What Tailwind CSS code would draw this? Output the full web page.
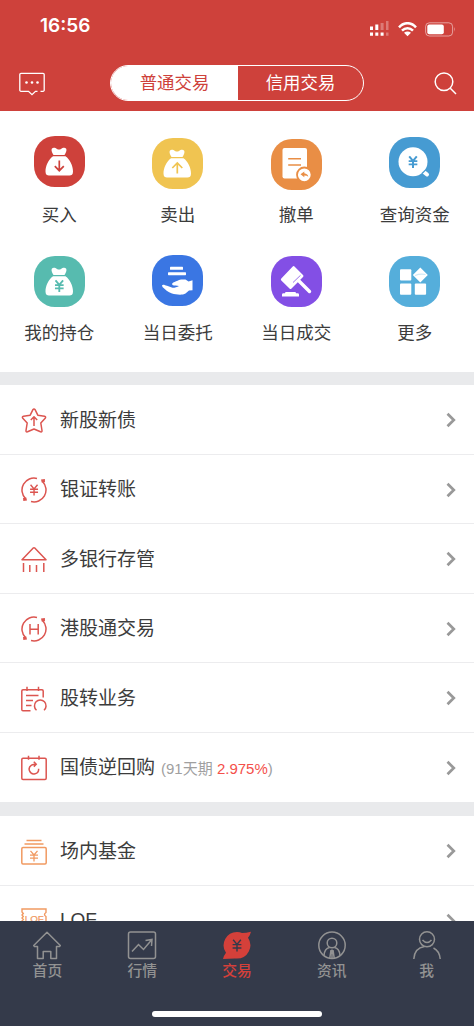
<!DOCTYPE html>
<html lang="zh-CN">
<head>
<meta charset="utf-8">
<meta name="viewport" content="width=device-width, initial-scale=1">
<title>交易</title>
<script src="https://cdn.jsdelivr.net/npm/@tailwindcss/browser@4"></script>
</head>
<body class="h-[1026px] w-[474px] overflow-hidden bg-white font-['Liberation_Sans','Noto_Sans_CJK_SC',sans-serif] text-[#3c3c3c]">
<svg class="hidden">
  <symbol id="chev" viewBox="0 0 10 16"><path d="M1.500 1.800 7.800 8 1.500 14.200" fill="none" stroke="#999" stroke-width="2.700"/></symbol>
  <symbol id="bag" viewBox="0 0 51 51"><path fill="#fff" d="M19.500 19C18 16.500 17 14.500 17.800 12.800 19 11 21.500 11.800 23 13 24.300 13.800 25.700 13.800 27 13 28.500 11.800 31 11 32.200 12.800 33 14.500 32 16.500 30.500 19ZM19 20.300H31.500C36 23.500 39 30 39 35.500 39 38.500 37.500 39.500 35.500 39.500H15C13 39.500 11.500 38.500 11.500 35.500 11.500 30 14.500 23.500 19 20.300Z"/></symbol>
  <symbol id="yen" viewBox="0 0 10 12"><path d="M1.500 .8 5 5 8.500 .8M5 5V11.500M1 5.200H9M1 8.200H9" fill="none" stroke="currentColor"/></symbol>
  <symbol id="cycle" viewBox="0 0 26 26"><g fill="none" stroke="currentColor" stroke-width="1.500"><path d="M16 1.400A12 12 0 0 0 4.500 21.500M10 24.600A12 12 0 0 0 21.500 4.500"/></g><path fill="currentColor" d="M2 21 5.300 20.500 6 23.500 2.300 24ZM20 2.500 23.900 2 24 5.200 20.700 5.500Z"/></symbol>
</svg>
<div class="flex h-full flex-col">
  <header class="h-[111px] shrink-0 bg-[#ce413b] text-white">
    <div class="flex h-[58px] items-center justify-between pr-[18px] pl-[40px]">
      <span class="-mt-[6px] font-['Inter'] text-[19px] leading-6 font-semibold">16:56</span>
      <div class="flex items-center gap-2">
        <svg class="h-[16px] w-[20px]" viewBox="0 0 20 16" fill="#fff"><path d="M0 5.500h3v3.500H0zM5.300 3.500h3V9h-3zM0 11.500h3v3.300H0zM5.300 11.500h3v3.300h-3zM10.600 11.500h3v3.300h-3z"/><path opacity=".3" d="M10.600 2h3v7h-3zM16 0h2.500v9H16zM16 11.500h2.500v3.300H16z"/></svg>
        <svg class="h-[15px] w-[19px]" viewBox="0 0 19 15" fill="none" stroke="#fff" stroke-width="2.500"><path d="M1 5.300C6-.2 13-.2 18 5.300M4 8.600C7.200 5.300 11.800 5.300 15 8.600"/><path fill="#fff" stroke="none" d="M6 10.800Q9.500 8.300 13 10.800L9.500 14.300Z"/></svg>
        <svg class="h-[15px] w-[31px]" viewBox="0 0 31 15"><rect x=".6" y=".8" width="27" height="13.200" rx="3.800" fill="none" stroke="#fff" stroke-opacity=".5"/><rect x="2.300" y="2.500" width="16.500" height="9.800" rx="2" fill="#fff"/><path d="M29.200 5Q31 7.400 29.200 9.800Z" fill="#fff" opacity=".5"/></svg>
      </div>
    </div>
    <div class="flex h-[51px] items-center pr-[17px] pl-[19px]">
      <svg class="h-[24px] w-[26px]" viewBox="0 0 26 24" fill="none" stroke="#fff" stroke-width="1.300"><path d="M21.500 19.300H24A1.200 1.200 0 0 0 25.200 18V2.500A1.200 1.200 0 0 0 24 1.300H2A1.200 1.200 0 0 0 .8 2.500V18A1.200 1.200 0 0 0 2 19.300H9.500L13 22.700 16.500 19.300H18.500"/><g fill="#fff" stroke="none"><circle cx="7.500" cy="10.500" r="1.300"/><circle cx="13" cy="10.500" r="1.300"/><circle cx="18.500" cy="10.500" r="1.300"/></g></svg>
      <div class="mt-[-1px] ml-[65px] flex h-[36px] w-[254px] overflow-hidden rounded-full border border-white text-[17.400px]">
        <div class="flex w-[127px] items-center justify-center bg-white pt-[1px] text-[#ce413b]">普通交易</div>
        <div class="flex flex-1 items-center justify-center pt-[1px]">信用交易</div>
      </div>
      <svg class="ml-auto h-[23px] w-[23px]" viewBox="0 0 23 23" fill="none" stroke="#fff" stroke-width="1.500"><circle cx="10" cy="9.800" r="8.800"/><path d="M16.300 16.200 22 22"/></svg>
    </div>
  </header>

  <section class="grid h-[260.500px] shrink-0 grid-cols-4 grid-rows-[118px_118px] pt-[25px] text-[17.500px] leading-[26px]">
    <div class="flex flex-col items-center gap-[15px]"><div class="size-[51px] rounded-[21px] bg-[#ce413b] text-[#ce413b]"><svg viewBox="0 0 51 51"><use href="#bag"/><path d="M25.300 24.500V34.500M20.800 30.200 25.300 34.700 29.800 30.200" fill="none" stroke="currentColor" stroke-width="1.700"/></svg></div><span>买入</span></div>
    <div class="flex flex-col items-center gap-[13px] pt-[2px]"><div class="size-[51px] rounded-[21px] bg-[#f0c451] text-[#f0c451]"><svg viewBox="0 0 51 51"><use href="#bag"/><path d="M25.300 35.500V25.500M20.300 30 25.300 25 30.300 30" fill="none" stroke="currentColor" stroke-width="1.700"/></svg></div><span>卖出</span></div>
    <div class="flex flex-col items-center gap-[12px] pt-[3px]"><div class="size-[51px] rounded-[21px] bg-[#e98e45]"><svg viewBox="0 0 51 51"><rect x="11.500" y="9" width="24.500" height="30.500" rx="2" fill="#fff"/><path d="M17.200 19.800H30M17.200 26H30" stroke="#e98e45" stroke-width="1.600"/><circle cx="33.300" cy="35.800" r="7.300" fill="#fff" stroke="#e98e45" stroke-width="1.800"/><path d="M29.500 35.300 33.300 32.500V34.300Q37 34.800 37.300 37.800 36 36.500 33.300 36.500V38.200Z" fill="#e98e45"/></svg></div><span>撤单</span></div>
    <div class="flex flex-col items-center gap-[14px] pt-[1px]"><div class="size-[51px] rounded-[21px] bg-[#469bd2] text-[#469bd2]"><svg viewBox="0 0 51 51"><circle cx="24" cy="24.800" r="14.500" fill="#fff"/><path d="M33 33.500 38 37.500" stroke="#fff" stroke-width="4" stroke-linecap="round"/><path d="M33 36.500 36.800 32.800" stroke="currentColor" stroke-width="1.200"/><use href="#yen" x="18.500" y="18.500" width="11" height="13" stroke-width="1.800"/></svg></div><span>查询资金</span></div>
    <div class="flex flex-col items-center gap-[13px] pt-[2px]"><div class="size-[51px] rounded-[21px] bg-[#57bbaf] text-[#57bbaf]"><svg viewBox="0 0 51 51"><use href="#bag"/><use href="#yen" x="19.800" y="23.500" width="11" height="13" stroke-width="1.700"/></svg></div><span>我的持仓</span></div>
    <div class="flex flex-col items-center gap-[14px] pt-[1px]"><div class="size-[51px] rounded-[21px] bg-[#3a76e3]"><svg viewBox="0 0 51 51" fill="#fff"><rect x="18" y="11.800" width="13" height="3" rx=".6"/><rect x="16" y="17.200" width="18" height="3" rx=".6"/><path d="M10 30.200C11 29 13 30 15 30.800L20.500 32.800C22 33 25 32.300 27 31 25 30.500 22 31 20.500 30 19.300 28.700 20.800 27.500 22.500 27 25 26.200 26 25 29 24.500H33.500L36.500 26.500 40.500 25.300V35.200L37 35.500 33.500 38.500C30 40.500 24 39.500 20 38.500 16 37.500 13 34 10.500 32Z"/></svg></div><span>当日委托</span></div>
    <div class="flex flex-col items-center gap-[13px] pt-[2px]"><div class="size-[51px] rounded-[21px] bg-[#834fe5]"><svg viewBox="0 0 51 51" fill="#fff"><path d="M21.500 10.800 Q22.500 9.500 23.500 10.500L32 19Q33 20 32 21L20.500 32.500Q19.500 33.500 18.500 32.500L10.300 24.500Q9.300 23.500 10.300 22.500Z"/><path d="M22 26.500 29.500 19.300" stroke="#834fe5" stroke-width=".8"/><path d="M28 25 38.500 35.500" stroke="#fff" stroke-width="3.400" stroke-linecap="round"/><path d="M11 38.500Q11 37.300 12.500 37.300H14L14.500 36H24.500L25 37.300H26.500Q28 37.300 28 38.500V40.500H11Z"/></svg></div><span>当日成交</span></div>
    <div class="flex flex-col items-center gap-[13px] pt-[2px]"><div class="size-[51px] rounded-[21px] bg-[#55aedb]"><svg viewBox="0 0 51 51" fill="#fff"><rect x="11" y="13.300" width="11.300" height="11.300" rx="1"/><rect x="11" y="27.500" width="11.300" height="11.300" rx="1"/><rect x="25.800" y="27.500" width="11.300" height="11.300" rx="1"/><path d="M31.300 11.500 38.800 19 31.300 26.500 23.800 19Z"/><path d="M26 19.500Q31 17.500 36.500 18.500" stroke="#cfe9f5" stroke-width="1.200" fill="none"/></svg></div><span>更多</span></div>
  </section>

  <div class="h-[13.500px] shrink-0 bg-[#e9eaec]"></div>

  <main class="min-h-0 flex-1 overflow-hidden text-[19px] text-[#3c3c3c]">
    <div class="flex h-[69.500px] items-center border-b border-[#ececee] pt-[2px] pr-[18px] pl-[21px]">
      <svg class="mt-[2px] mr-[13px] size-[26px] text-[#dc5550]" viewBox="0 0 26 26" fill="none" stroke="currentColor" stroke-width="1.500" stroke-linejoin="round"><path d="M11.800 1.800Q13 .3 14.200 1.800L16.800 7.200 23.500 8.200Q25.300 8.700 24.200 10.200L19.800 15 21 22.500Q21.200 24.300 19.500 23.800L13 21 6.500 23.800Q4.800 24.300 5 22.500L6.200 15 1.800 10.200Q.7 8.700 2.500 8.200L9.200 7.200Z"/><path d="M13 18V8.800M9.800 12 13 8.800 16.200 12"/></svg>
      <span class="pt-[1px]">新股新债</span><svg class="ml-auto h-[16px] w-[10px]"><use href="#chev"/></svg>
    </div>
    <div class="flex h-[69.500px] items-center border-b border-[#ececee] pt-[2px] pr-[18px] pl-[21px]">
      <svg class="mt-[1px] mr-[13px] size-[26px] text-[#dc5550]" viewBox="0 0 26 26"><use href="#cycle"/><use href="#yen" x="7.800" y="7" width="10.500" height="12" stroke-width="1.400"/></svg>
      <span class="pt-[1px]">银证转账</span><svg class="ml-auto h-[16px] w-[10px]"><use href="#chev"/></svg>
    </div>
    <div class="flex h-[69.500px] items-center border-b border-[#ececee] pt-[2px] pr-[18px] pl-[21px]">
      <svg class="mt-[1px] mr-[13px] size-[26px] text-[#dc5550]" viewBox="0 0 26 26" fill="none" stroke="currentColor" stroke-width="1.500" stroke-linejoin="round"><path d="M12 1.200Q13 .5 14 1.200L25 12.800H1ZM2.500 16V25M8.800 18V25M15.500 18V25M22.800 16V25"/></svg>
      <span class="pt-[1px]">多银行存管</span><svg class="ml-auto h-[16px] w-[10px]"><use href="#chev"/></svg>
    </div>
    <div class="flex h-[69.500px] items-center border-b border-[#ececee] pt-[2px] pr-[18px] pl-[21px]">
      <svg class="mt-[1px] mr-[13px] size-[26px] text-[#dc5550]" viewBox="0 0 26 26"><use href="#cycle"/><path d="M9 8V18.500M17.200 8V18.500M9 13.200H17.200" fill="none" stroke="currentColor" stroke-width="1.500"/></svg>
      <span class="pt-[1px]">港股通交易</span><svg class="ml-auto h-[16px] w-[10px]"><use href="#chev"/></svg>
    </div>
    <div class="flex h-[69.500px] items-center border-b border-[#ececee] pt-[2px] pr-[18px] pl-[21px]">
      <svg class="mt-[2px] mr-[13px] size-[26px] text-[#dc5550]" viewBox="0 0 26 26" fill="none" stroke="currentColor" stroke-width="1.500"><path d="M9.500 24.800H2Q.8 24.800 .8 23.500V5Q.8 3.800 2 3.800H21Q22.200 3.800 22.200 5V11.500M6 .8V5M17.500 .8V5M5 9.500H17.500M5 14.500H12M5 19.500H10.500M15.500 24.200A5.800 5.800 0 1 1 23 24.200"/></svg>
      <span class="pt-[1px]">股转业务</span><svg class="ml-auto h-[16px] w-[10px]"><use href="#chev"/></svg>
    </div>
    <div class="flex h-[69.500px] items-center pt-[1px] pr-[18px] pl-[21px]">
      <svg class="mr-[13px] size-[26px] text-[#dc5550]" viewBox="0 0 26 26" fill="none" stroke="currentColor" stroke-width="1.500"><rect x=".8" y="3.300" width="24.400" height="21.200" rx="1.200"/><path d="M7.500 .8V4.800M18 .8V4.800M10.500 10.200A4.700 4.700 0 1 0 17.600 13.800M10.500 10.200Q12.500 9 15 9.200M12.800 6.800 15.200 9.200 12.800 11.600"/></svg>
      <span class="pt-[1px]">国债逆回购</span><span class="ml-[6px] pt-[2px] text-[15px] text-[#a0a0a0]">(91天期 <span class="text-[#f4504b]">2.975%</span>)</span><svg class="ml-auto h-[16px] w-[10px]"><use href="#chev"/></svg>
    </div>
    <div class="h-[14px] bg-[#e9eaec]"></div>
    <div class="flex h-[69.500px] items-center border-b border-[#ececee] pt-[2px] pr-[18px] pl-[21px]">
      <svg class="mt-[2px] mr-[13px] size-[26px] text-[#f19a62]" viewBox="0 0 26 26" fill="none" stroke="currentColor" stroke-width="1.500"><path d="M5.500 1.500H20.500M3.500 5H22.500"/><rect x=".8" y="8.500" width="24.400" height="16.500" rx="1.200"/><use href="#yen" x="8" y="11" width="10" height="12" stroke-width="1.300"/></svg>
      <span class="pt-[1px]">场内基金</span><svg class="ml-auto h-[16px] w-[10px]"><use href="#chev"/></svg>
    </div>
    <div class="flex h-[69.500px] items-center pr-[18px] pl-[21px]">
      <svg class="mt-[2px] mr-[13px] size-[26px] text-[#f19a62]" viewBox="0 0 26 26" fill="none" stroke="currentColor" stroke-width="1.400"><path d="M1 1H25V4.500Q22 6.500 25 8.500V19H1V16L2.300 14.500 1 13 2.300 11.500 1 10 2.300 8.500 1 7 2.300 5.500 1 4Z"/><text x="3.800" y="13.500" font-size="9.800" fill="currentColor" stroke="currentColor" stroke-width=".2" font-family="Liberation Sans">LOF</text></svg>
      <span>LOF</span><svg class="mt-[2px] ml-auto h-[16px] w-[10px]"><use href="#chev"/></svg>
    </div>
  </main>

  <footer class="flex h-[105px] shrink-0 flex-col items-center justify-between bg-[#343a4a] pt-[10px] pb-[9px]">
    <nav class="grid w-full grid-cols-5 text-[14.800px] leading-[20px] font-medium text-[#929292]">
      <div class="flex flex-col items-center"><svg class="mb-[1px] h-[29px] w-[30px]" viewBox="0 0 30 29" fill="none" stroke="currentColor" stroke-width="1.500" stroke-linejoin="round"><path d="M15 1.200 28.300 14.500 27.500 15.500H24.500V27.500H18.800V20.500H11.200V27.500H5.500V15.500H2.500L1.700 14.500Z"/></svg><span>首页</span></div>
      <div class="flex flex-col items-center"><svg class="mb-[1px] h-[29px] w-[30px]" viewBox="0 0 30 29" fill="none" stroke="currentColor" stroke-width="1.500"><rect x="1.500" y="1" width="27" height="26.500" rx="2"/><path d="M5 20.500 11.500 13.500 16.500 18.500 24.500 9M18.500 9.500 25 8.500 24.500 15"/></svg><span>行情</span></div>
      <div class="flex flex-col items-center text-[#d4403a]"><svg class="mb-[1px] h-[29px] w-[30px]" viewBox="0 0 30 29"><path fill="currentColor" d="M15 1Q18 1 20 2 24 2 29 .8 28.500 3.500 26 6.800A13.300 13.300 0 0 1 15 27.600Q8 27.500 1 28 1.500 25 4 21.800A13.300 13.300 0 0 1 15 1Z"/><use href="#yen" x="9.500" y="7.500" width="11" height="14" class="text-[#343a4a]" stroke-width="1.300"/></svg><span>交易</span></div>
      <div class="flex flex-col items-center"><svg class="mb-[1px] h-[29px] w-[30px]" viewBox="0 0 30 29" fill="none" stroke="currentColor" stroke-width="1.500"><circle cx="15" cy="14.300" r="13.200"/><circle cx="15" cy="12" r="4.800"/><path d="M7 24.500Q7.500 17.500 12.500 16.500M23 24.500Q22.500 17.500 17.500 16.500M14 19 12.800 27M16 19 17.200 27M15 18.500V27.500"/></svg><span>资讯</span></div>
      <div class="flex flex-col items-center"><svg class="mb-[1px] h-[29px] w-[30px]" viewBox="0 0 30 29" fill="none" stroke="currentColor" stroke-width="1.500"><circle cx="15" cy="8.300" r="7.500"/><path d="M10.500 9Q15 14 19.500 9M1.800 28Q2.500 17 12.500 15.500M21.500 17Q27.500 20 28.200 28"/></svg><span>我</span></div>
    </nav>
    <div class="h-[6px] w-[170px] rounded-full bg-white"></div>
  </footer>
</div>
</body>
</html>
